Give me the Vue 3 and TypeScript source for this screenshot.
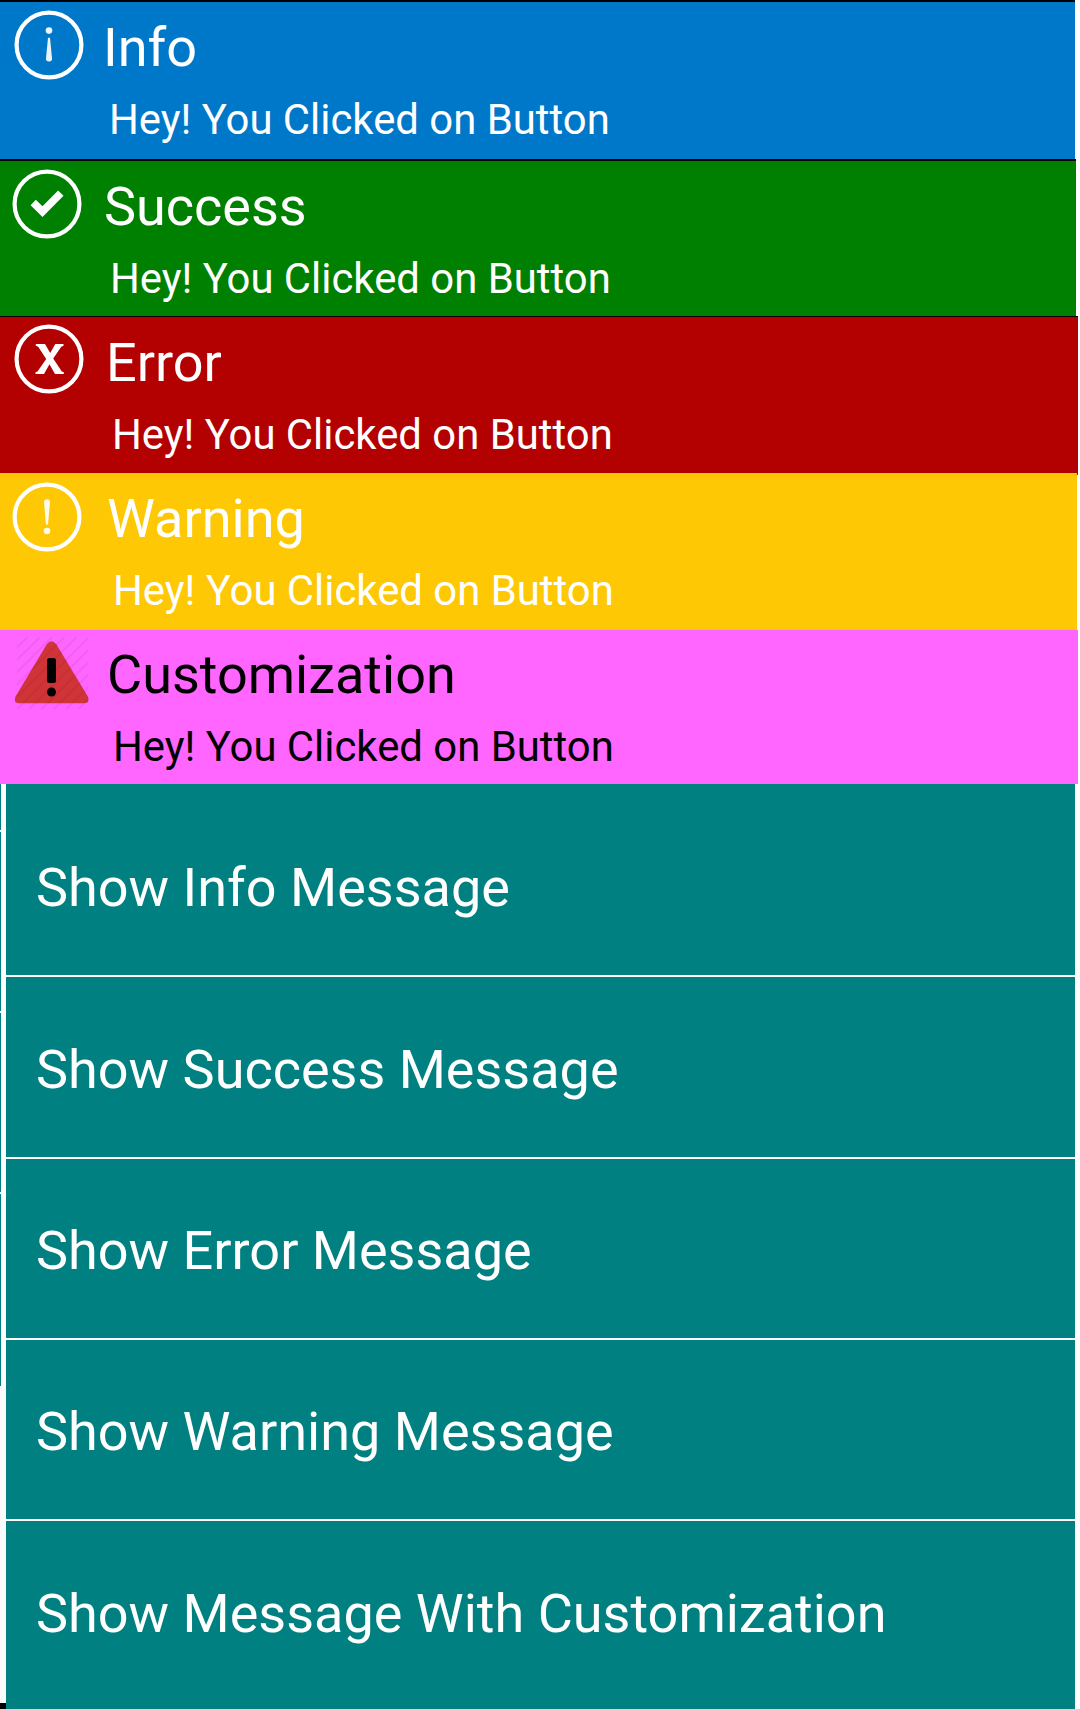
<script setup lang="ts">
type Kind = 'info' | 'success' | 'error' | 'warning' | 'custom'

interface Banner {
  kind: Kind
  title: string
}

const banners: Banner[] = [
  { kind: 'info', title: 'Info' },
  { kind: 'success', title: 'Success' },
  { kind: 'error', title: 'Error' },
  { kind: 'warning', title: 'Warning' },
  { kind: 'custom', title: 'Customization' },
]
const message = 'Hey! You Clicked on Button'

const actions: string[] = [
  'Show Info Message',
  'Show Success Message',
  'Show Error Message',
  'Show Warning Message',
  'Show Message With Customization',
]
</script>

<template>
  <main class="screen">
    <section v-for="b in banners" :key="b.kind" class="banner" :class="b.kind">
      <svg v-if="b.kind !== 'custom'" class="icon soft" viewBox="0 0 72 72">
        <circle cx="36" cy="36" r="32.4" fill="none" stroke="#fff" stroke-width="4.2" />
        <g v-if="b.kind === 'info'" fill="#fff" fill-opacity="0.92">
          <circle cx="36" cy="21.6" r="3.3" />
          <path d="M35 28.7h2l2 20.5q.3 3.2-3 3.2t-3-3.2z" />
        </g>
        <path v-else-if="b.kind === 'success'" fill="#fff" d="M19.6 37.2l5.2-5.4 6.7 6.4 15.6-15.7 5.4 5.2-21 21.4z" />
        <path
          v-else-if="b.kind === 'error'"
          fill="#fff"
          d="M22.8 21H32L37.2 30 42.3 21H50.5V22.8L48.3 23.8 40.2 35.6 48.8 48.5 50.8 49.3V51H42L36.5 41.2 31 51H22.5V49.3L24.5 48.5 33.2 36 25.2 23.8 22.8 22.8Z"
        />
        <g v-else fill="#fff" fill-opacity="0.92">
          <path d="M33 21.5q0-3.2 3-3.2t3 3.2L37 43.5h-2z" />
          <circle cx="36" cy="50" r="3.3" />
        </g>
      </svg>
      <svg v-else class="icon" viewBox="0 0 74 74">
        <defs>
          <pattern id="hatch" width="8.7" height="8.7" patternUnits="userSpaceOnUse" patternTransform="rotate(45)">
            <rect width="1.6" height="8.7" fill="#000" fill-opacity="0.07" />
          </pattern>
          <clipPath id="hatch-area"><rect x="2" y="1" width="71" height="72" /></clipPath>
        </defs>
        <path
          fill="#d03438"
          d="M31.8 8.3Q36.5 2 41.3 8.3L72.7 60.3Q75.5 67.3 68.5 67.3H5Q-2.5 67.3 .7 60.3z"
        />
        <rect x="32" y="22" width="9" height="25" rx="2.5" fill="#000" />
        <circle cx="36.5" cy="56" r="4.5" fill="#000" />
        <rect width="74" height="74" fill="url(#hatch)" clip-path="url(#hatch-area)" />
      </svg>
      <div class="copy">
        <h2 class="title">{{ b.title }}</h2>
        <p class="message">{{ message }}</p>
      </div>
    </section>

    <div class="lower">
      <div class="edge">
        <span class="edge-cell first"></span>
        <span class="edge-cell"></span>
        <span class="edge-cell"></span>
        <span class="edge-cell last"></span>
        <span class="edge-blank"></span>
        <span class="edge-foot"></span>
      </div>
      <div class="actions">
        <button v-for="a in actions" :key="a" type="button" class="action">{{ a }}</button>
      </div>
    </div>
  </main>
</template>

<style>
body {
  background: #fff;
}
</style>

<style scoped>
.screen {
  width: 1080px;
  height: 1709px;
  overflow: hidden;
  display: flex;
  flex-direction: column;
  font-family: Roboto, sans-serif;
  background: #fff;
}
.banner {
  box-sizing: border-box;
  flex: none;
  display: flex;
  align-items: flex-start;
  color: #fff;
}
.icon {
  flex: none;
  display: block;
  width: 72px;
  height: 72px;
}
.soft {
  filter: blur(0.4px);
}
.copy {
  display: flex;
  flex-direction: column;
}
.title,
.message {
  margin: 0;
  font-weight: 400;
  white-space: nowrap;
}
.title {
  font-size: 54px;
  line-height: 64px;
}
.message {
  font-size: 41.85px;
  line-height: 50px;
  margin-top: 15px;
  padding-left: 6px;
}
.info {
  width: 1075px;
  height: 159px;
  border-top: 2px solid #000;
  background: #0078c9;
  padding: 7px 0 0 13px;
}
.info .copy {
  margin: 7px 0 0 18px;
}
.success {
  width: 1076px;
  height: 157px;
  border-top: 2px solid #000;
  background: #008000;
  padding: 7px 0 0 11px;
}
.success .copy {
  margin: 7px 0 0 21px;
}
.error {
  position: relative;
  width: 1078px;
  height: 157px;
  border-top: 1px solid #000;
  background: #b30000;
  padding: 6px 0 0 13px;
}
/* The red banner's right edge hangs slightly over the next one. */
.error::after {
  content: '';
  position: absolute;
  right: 0;
  bottom: -2px;
  width: 1px;
  height: 2px;
  background: #b30000;
}
.error .copy {
  margin: 8px 0 0 21px;
}
.warning {
  width: 1077px;
  height: 157px;
  background: #ffc805;
  padding: 8px 0 0 11px;
}
.warning .copy {
  margin: 6px 0 0 24px;
}
.custom {
  width: 1078px;
  height: 154px;
  background: #ff66ff;
  color: #000;
  padding: 6px 0 0 15px;
}
.custom .icon {
  width: 74px;
  height: 74px;
}
.custom .copy {
  margin: 7px 0 0 18px;
}
.lower {
  flex: 1;
  display: flex;
  width: 1075px;
}
.edge {
  width: 6px;
  display: flex;
  flex-direction: column;
}
.edge-cell {
  width: 1px;
  height: 179px;
  margin-bottom: 2px;
  background: #008080;
}
.edge-cell.first {
  height: 46px;
}
.edge-cell.last {
  height: 192px;
  margin: 0;
}
.edge-blank {
  flex: 1;
  background: #fcfcfc;
}
.edge-foot {
  height: 6px;
  background: #000;
}
.actions {
  flex: 1;
  display: flex;
  flex-direction: column;
}
.action {
  box-sizing: border-box;
  height: 181px;
  flex: none;
  border: 0;
  border-bottom: 2px solid #fff;
  margin: 0;
  padding: 4px 0 0 30px;
  background: #008080;
  color: #fff;
  font: 400 54px/64px Roboto, sans-serif;
  text-align: left;
  white-space: nowrap;
}
.action:first-child {
  height: 193px;
  padding-top: 16px;
}
.action:nth-child(2) {
  height: 182px;
  padding-top: 5px;
}
.action:last-child {
  height: 188px;
  border-bottom: 0;
  padding: 0 0 2px 30px;
}
</style>
